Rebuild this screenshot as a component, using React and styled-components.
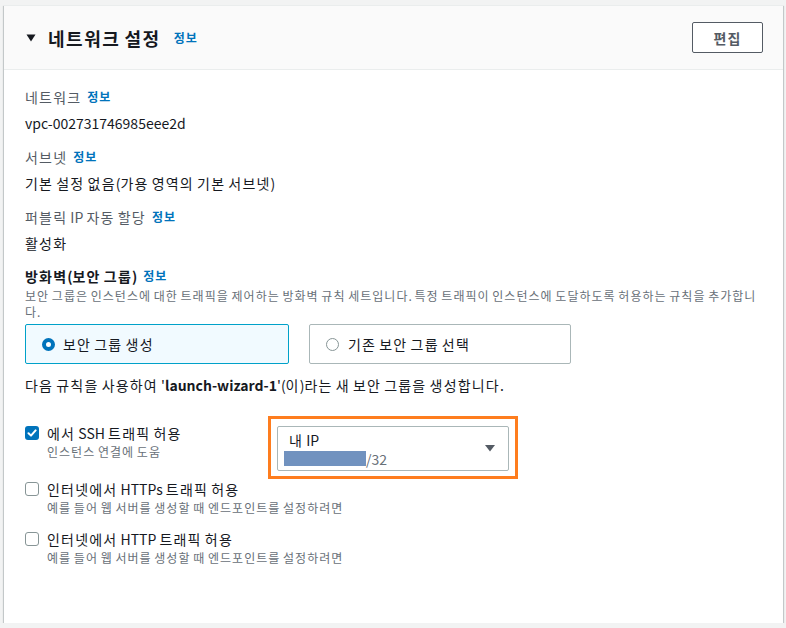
import React from 'react';
import styled, { createGlobalStyle } from 'styled-components';

const GlobalStyle = createGlobalStyle`
    body {
        margin: 0;
        background: #f2f3f3;
        font-family: "Noto Sans CJK KR", "Noto Sans", sans-serif;
        color: #16191f;
    }
`;

// hangul in this font runs a bit narrow, widen only the syllables
const Hangul = styled.span`
    letter-spacing: 0.085em;
`;

const ko = (text) =>
    text.split(/([\uAC00-\uD7A3]+)/).map((part, i) =>
        /[\uAC00-\uD7A3]/.test(part) ? <Hangul key={i}>{part}</Hangul> : part
    );

const Card = styled.section`
    width: 779px;
    margin: 5px 0 0 4px;
    background: #fff;
    border-top: 1px solid #eaeded;
    box-shadow: 0 1px 1px 0 rgba(0, 28, 36, 0.3), 1px 1px 1px 0 rgba(0, 28, 36, 0.15), -1px 1px 1px 0 rgba(0, 28, 36, 0.15);
`;

const Header = styled.div`
    display: flex;
    align-items: center;
    justify-content: space-between;
    height: 63px;
    padding: 0 20px 0 21px;
    background: #fafafa;
    border-bottom: 1px solid #eaeded;
`;

const TitleRow = styled.div`
    display: flex;
    align-items: center;
`;

const Caret = styled.svg`
    display: block;
    flex: none;
    margin: ${props => (props.inline ? '0' : '0 12px 0 1px')};
    fill: ${props => props.color || '#16191f'};
`;

const Title = styled.h2`
    margin: 0;
    font-size: 18px;
    line-height: 24px;
    font-weight: 700;
    color: #16191f;
`;

const Info = styled.a`
    margin-left: ${props => props.gap || 6}px;
    font-size: 12px;
    font-weight: 700;
    color: #0073bb;
    text-decoration: none;
`;

const EditButton = styled.button`
    width: 71px;
    height: 31px;
    border: 1px solid #545b64;
    border-radius: 2px;
    background: #fff;
    color: #545b64;
    font-family: inherit;
    font-size: 14px;
    font-weight: 700;
`;

const Body = styled.div`
    padding: 17px 20px 57px 21px;
`;

const Field = styled.div`
    margin-top: ${props => props.top || 0}px;
`;

const Label = styled.div`
    display: flex;
    align-items: center;
    font-size: 14px;
    line-height: 20px;
    color: ${props => (props.strong ? '#16191f' : '#545b64')};
    font-weight: ${props => (props.strong ? 700 : 400)};
`;

const Value = styled.div`
    margin-top: 6px;
    font-size: 14px;
    line-height: 20px;
    color: #16191f;
`;

const Description = styled.div`
    margin-top: 2px;
    font-size: 12px;
    line-height: 16px;
    color: #687078;
`;

const Tiles = styled.div`
    display: flex;
    gap: 20px;
    margin-top: 4px;
`;

const Tile = styled.div`
    box-sizing: border-box;
    display: flex;
    align-items: center;
    gap: ${props => (props.selected ? 8 : 9)}px;
    width: ${props => props.width}px;
    height: 40px;
    padding: 0 16px;
    border: 1px solid ${props => (props.selected ? '#00a1c9' : '#aab7b8')};
    border-radius: 2px;
    background: ${props => (props.selected ? '#f1faff' : '#fff')};
    font-size: 14px;
    color: #16191f;
`;

const Radio = styled.span`
    box-sizing: border-box;
    width: 13px;
    height: 13px;
    border-radius: 50%;
    border: ${props => (props.checked ? '4px solid #0073bb' : '1.5px solid #879596')};
    background: #fff;
`;

const Note = styled.div`
    margin-top: 11px;
    font-size: 14px;
    line-height: 20px;
    color: #16191f;

    b {
        font-weight: 700;
    }
`;

const Rule = styled.div`
    display: flex;
    align-items: flex-start;
    margin-top: ${props => props.top || 0}px;
`;

const RuleText = styled.div`
    display: flex;
    gap: 8px;
    width: ${props => (props.width ? props.width + 'px' : 'auto')};
    padding-top: ${props => props.pad || 0}px;
`;

const Box = styled.span`
    box-sizing: border-box;
    display: flex;
    align-items: center;
    justify-content: center;
    flex: none;
    width: 14px;
    height: 14px;
    margin-top: 3px;
    border-radius: 3px;
    border: ${props => (props.checked ? 'none' : '1.5px solid #879596')};
    background: ${props => (props.checked ? '#0073bb' : '#fff')};
`;

const RuleTitle = styled.div`
    font-size: 14px;
    line-height: 20px;
    color: #16191f;
`;

const RuleHint = styled.div`
    font-size: 12px;
    line-height: 17px;
    color: #687078;
`;

const Highlight = styled.div`
    box-sizing: border-box;
    width: 250px;
    height: 63px;
    padding: 7px 6px 5px 6px;
    border: 3px solid #fe7d1e;
`;

const Select = styled.div`
    box-sizing: border-box;
    display: flex;
    align-items: center;
    justify-content: space-between;
    height: 45px;
    padding: 0 13px 0 11px;
    border: 1px solid #aab7b8;
    border-radius: 2px;
`;

const SelectMain = styled.div`
    font-size: 14px;
    line-height: 18px;
    color: #16191f;
`;

const SelectSub = styled.div`
    display: flex;
    align-items: center;
    margin-top: 2px;
    font-size: 14px;
    line-height: 16px;
    color: #687078;
`;

const Redacted = styled.span`
    display: block;
    width: 82px;
    height: 15px;
    margin-left: -5px;
    background: #7192bf;
`;

const Check = () => (
    <svg width="10" height="10" viewBox="0 0 10 10">
        <path d="M1.5 5.2L4 7.6 8.6 2.4" fill="none" stroke="#fff" strokeWidth="2" strokeLinecap="round" strokeLinejoin="round" />
    </svg>
);

const fields = [
    { label: '네트워크', value: 'vpc-002731746985eee2d' },
    { label: '서브넷', value: '기본 설정 없음(가용 영역의 기본 서브넷)' },
    { label: '퍼블릭 IP 자동 할당', value: '활성화' },
];

const rules = [
    { title: '인터넷에서 HTTPs 트래픽 허용', hint: '예를 들어 웹 서버를 생성할 때 엔드포인트를 설정하려면', top: 0 },
    { title: '인터넷에서 HTTP 트래픽 허용', hint: '예를 들어 웹 서버를 생성할 때 엔드포인트를 설정하려면', top: 13 },
];

export default function App() {
    return (
        <>
            <GlobalStyle />
            <Card>
                <Header>
                    <TitleRow>
                        <Caret width="10" height="8" viewBox="0 0 10 8">
                            <path d="M0.5 0.5h9L5 7.5z" />
                        </Caret>
                        <Title>{ko('네트워크 설정')}</Title>
                        <Info gap={13} href="#">{ko('정보')}</Info>
                    </TitleRow>
                    <EditButton>{ko('편집')}</EditButton>
                </Header>
                <Body>
                    {fields.map((field, idx) => (
                        <Field key={field.label} top={idx ? 14 : 0}>
                            <Label><span>{ko(field.label)}</span><Info href="#">{ko('정보')}</Info></Label>
                            <Value>{ko(field.value)}</Value>
                        </Field>
                    ))}

                    <Field top={13}>
                        <Label strong><span>{ko('방화벽(보안 그룹)')}</span><Info href="#">{ko('정보')}</Info></Label>
                        <Description>
                            {ko('보안 그룹은 인스턴스에 대한 트래픽을 제어하는 방화벽 규칙 세트입니다. 특정 트래픽이 인스턴스에 도달하도록 허용하는 규칙을 추가합니다.')}
                        </Description>
                        <Tiles>
                            <Tile selected width={264}><Radio checked /><span>{ko('보안 그룹 생성')}</span></Tile>
                            <Tile width={262}><Radio /><span>{ko('기존 보안 그룹 선택')}</span></Tile>
                        </Tiles>
                        <Note>
                            {ko('다음 규칙을 사용하여 ')}'<b>launch-wizard-1</b>'{ko('(이)라는 새 보안 그룹을 생성합니다.')}
                        </Note>
                    </Field>

                    <Rule top={21}>
                        <RuleText width={243} pad={7}>
                            <Box checked><Check /></Box>
                            <div>
                                <RuleTitle>{ko('에서 SSH 트래픽 허용')}</RuleTitle>
                                <RuleHint>{ko('인스턴스 연결에 도움')}</RuleHint>
                            </div>
                        </RuleText>
                        <Highlight>
                            <Select>
                                <div>
                                    <SelectMain>{ko('내 IP')}</SelectMain>
                                    <SelectSub><Redacted />/32</SelectSub>
                                </div>
                                <Caret inline color="#545b64" width="10" height="7" viewBox="0 0 10 7">
                                    <path d="M0 0h10L5 6.5z" />
                                </Caret>
                            </Select>
                        </Highlight>
                    </Rule>

                    {rules.map(rule => (
                        <Rule key={rule.title} top={rule.top}>
                            <RuleText>
                                <Box />
                                <div>
                                    <RuleTitle>{ko(rule.title)}</RuleTitle>
                                    <RuleHint>{ko(rule.hint)}</RuleHint>
                                </div>
                            </RuleText>
                        </Rule>
                    ))}
                </Body>
            </Card>
        </>
    );
}
